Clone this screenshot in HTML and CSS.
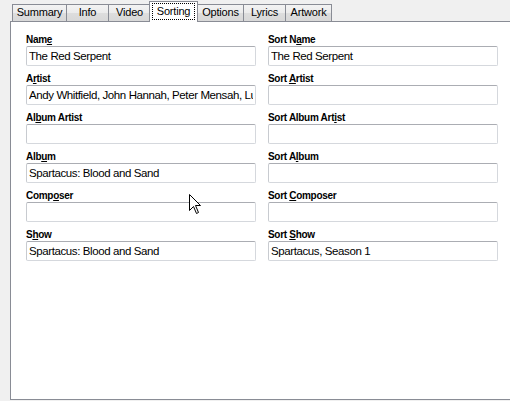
FILE: index.html
```html
<!DOCTYPE html>
<html>
<head>
<meta charset="utf-8">
<link rel="stylesheet" href="styles.css">
</head>
<body>
<div class="tabs">
  <div class="tab tab-summary">Summary</div>
  <div class="tab tab-info">Info</div>
  <div class="tab tab-video">Video</div>
  <div class="tab tab-sorting active"><span class="focus">Sorting</span></div>
  <div class="tab tab-options">Options</div>
  <div class="tab tab-lyrics">Lyrics</div>
  <div class="tab tab-artwork">Artwork</div>
</div>
<div class="panel">
  <div class="form">
    <div class="field"><label>Nam<u>e</u></label><input type="text" value="The Red Serpent"></div>
    <div class="field"><label>Sort N<u>a</u>me</label><input type="text" value="The Red Serpent"></div>
    <div class="field"><label>A<u>r</u>tist</label><input type="text" value="Andy Whitfield, John Hannah, Peter Mensah, Lucy Lawless"></div>
    <div class="field"><label>Sort <u>A</u>rtist</label><input type="text" value=""></div>
    <div class="field"><label>Al<u>b</u>um Artist</label><input type="text" value=""></div>
    <div class="field"><label>Sort Album Art<u>i</u>st</label><input type="text" value=""></div>
    <div class="field"><label>Alb<u>u</u>m</label><input type="text" value="Spartacus: Blood and Sand"></div>
    <div class="field"><label>Sort A<u>l</u>bum</label><input type="text" value=""></div>
    <div class="field"><label>Comp<u>o</u>ser</label><input type="text" value=""></div>
    <div class="field"><label>Sort <u>C</u>omposer</label><input type="text" value=""></div>
    <div class="field"><label>S<u>h</u>ow</label><input type="text" value="Spartacus: Blood and Sand"></div>
    <div class="field"><label>Sort <u>S</u>how</label><input type="text" value="Spartacus, Season 1"></div>
  </div>
</div>
<svg class="cursor" width="14" height="21" viewBox="0 0 14 21">
  <path d="M0.5 0.5 L0.5 16.5 L4.5 12.5 L7.5 19.5 L9.5 18.5 L6.5 11.5 L11.5 11.5 Z" fill="#fff" stroke="#000" stroke-width="1" stroke-linejoin="miter"/>
</svg>
</body>
</html>
```

FILE: styles.css
```css
html, body {
  margin: 0;
  padding: 0;
}

body {
  width: 510px;
  height: 401px;
  overflow: hidden;
  background: #f0f0f0;
  font-family: "Liberation Sans", Arial, sans-serif;
  color: #000;
  position: relative;
}

.tabs {
  display: flex;
  align-items: flex-end;
  height: 22px;
  padding-left: 12px;
  position: relative;
  z-index: 1;
}

.tab {
  box-sizing: border-box;
  flex: none;
  height: 17px;
  margin-bottom: 1px;
  margin-left: -1px;
  border: 1px solid #898c95;
  border-bottom: none;
  background: linear-gradient(#f3f3f3, #ebebeb 50%, #dddddd 51%, #d8d8d8);
  font-size: 11px;
  line-height: 15px;
  letter-spacing: -0.2px;
  text-align: center;
  white-space: nowrap;
}

.tab:first-child {
  margin-left: 0;
}

.tab-summary { width: 55px; }
.tab-info { width: 43px; }
.tab-video { width: 43px; }
.tab-sorting { width: 49px; }
.tab-options { width: 47px; }
.tab-lyrics { width: 43px; }
.tab-artwork { width: 47px; }

.tab.active {
  height: 21px;
  margin-bottom: 0;
  margin-left: -2px;
  padding-top: 1px;
  background: #fff;
  position: relative;
  z-index: 2;
}

.focus {
  display: block;
  margin: 0 2px;
  border: 1px dotted #000;
  line-height: 15px;
}

.panel {
  box-sizing: border-box;
  width: 510px;
  height: 379px;
  margin-left: 10px;
  margin-top: -1px;
  padding: 12px 0 0 15px;
  border: 1px solid #898c95;
  border-right: none;
  background: #fff;
}

.form {
  display: grid;
  grid-template-columns: 230px 230px;
  column-gap: 12px;
  row-gap: 7px;
}

.field label {
  display: block;
  font-size: 10px;
  font-weight: bold;
  line-height: 11px;
  margin-bottom: 1px;
  letter-spacing: -0.3px;
  white-space: nowrap;
}

.field u {
  text-decoration: underline;
  text-underline-offset: 1px;
}

.field input {
  display: block;
  box-sizing: border-box;
  width: 230px;
  height: 20px;
  margin: 0;
  padding: 0 2px;
  border: 1px solid #d5d8dd;
  border-top-color: #abadb3;
  border-left-color: #c8cbd0;
  border-radius: 2px;
  background: #fff;
  font-family: "Liberation Sans", Arial, sans-serif;
  font-size: 11.5px;
  letter-spacing: -0.4px;
  color: #000;
  outline: none;
  -webkit-appearance: none;
  appearance: none;
}

.cursor {
  position: absolute;
  left: 189px;
  top: 194px;
}
```
